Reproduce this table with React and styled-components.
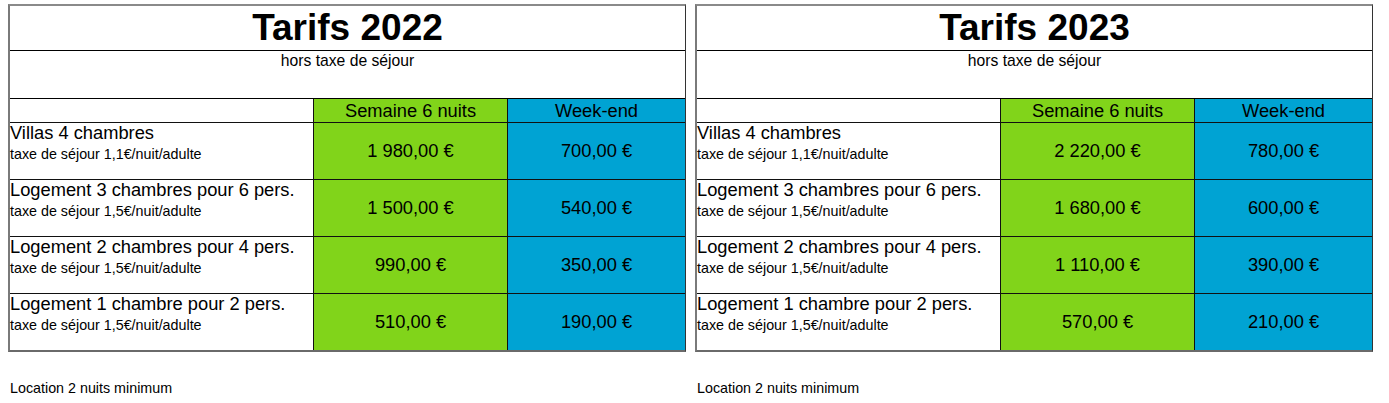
import React from "react";
import styled, { createGlobalStyle } from "styled-components";

const Global = createGlobalStyle`
	body {
		margin: 0;
		background: #fff;
		font-family: "Liberation Sans", Arial, sans-serif;
		color: #000;
	}
`;

const Page = styled.div`
	display: flex;
	gap: 9px;
	padding: 4px 0 0 8px;
`;

const Column = styled.div`
	display: flex;
	flex-direction: column;
`;

const Table = styled.div`
	display: grid;
	grid-template-columns: 304px 194px 177px;
	grid-template-rows: 45px 48px 24px 57px 57px 57px 56px;
	border-left: 2px solid #7a7a7a;
	border-top: 2px solid #8a8a8a;
	border-right: 1px solid #333;
	border-bottom: 2px solid #6a6a6a;
	width: fit-content;
`;

const Title = styled.div`
	grid-column: 1 / 4;
	border-bottom: 1px solid #000;
	font-size: 37px;
	font-weight: 700;
	text-align: center;
	line-height: 44px;
`;

const Subtitle = styled.div`
	grid-column: 1 / 4;
	border-bottom: 1px solid #000;
	font-size: 15.7px;
	text-align: center;
	padding-top: 1px;
	line-height: 18px;
`;

const Cell = styled.div`
	box-sizing: border-box;
	border-bottom: ${(p) => (p.$last ? "none" : "1px solid #111")};
	border-right: ${(p) => (p.$end ? "none" : "1px solid #111")};
	background: ${(p) => p.$bg || "#fff"};
`;

const HeadCell = styled(Cell)`
	font-size: 18.3px;
	text-align: center;
	line-height: 23px;
`;

const Label = styled(Cell)`
	display: flex;
	flex-direction: column;
	padding: 0;
`;

const Name = styled.span`
	font-size: 18.3px;
	line-height: 20px;
`;

const Tax = styled.span`
	font-size: 14.3px;
	line-height: 22px;
`;

const Price = styled(Cell)`
	display: flex;
	align-items: center;
	justify-content: center;
	font-size: 18.3px;
`;

const Footer = styled.div`
	font-size: 14.3px;
	padding: 28px 0 0 2px;
`;

const GREEN = "#81d41a";
const BLUE = "#00a3d3";

const tables = [
	{
		year: "2022",
		rows: [
			["Villas 4 chambres", "1,1", "1 980,00 €", "700,00 €"],
			["Logement 3 chambres pour 6 pers.", "1,5", "1 500,00 €", "540,00 €"],
			["Logement 2 chambres pour 4 pers.", "1,5", "990,00 €", "350,00 €"],
			["Logement 1 chambre pour 2 pers.", "1,5", "510,00 €", "190,00 €"],
		],
	},
	{
		year: "2023",
		rows: [
			["Villas 4 chambres", "1,1", "2 220,00 €", "780,00 €"],
			["Logement 3 chambres pour 6 pers.", "1,5", "1 680,00 €", "600,00 €"],
			["Logement 2 chambres pour 4 pers.", "1,5", "1 110,00 €", "390,00 €"],
			["Logement 1 chambre pour 2 pers.", "1,5", "570,00 €", "210,00 €"],
		],
	},
];

const PriceTable = ({ year, rows }) => (
	<Column>
		<Table>
			<Title>Tarifs {year}</Title>
			<Subtitle>hors taxe de séjour</Subtitle>
			<Cell />
			<HeadCell $bg={GREEN}>Semaine 6 nuits</HeadCell>
			<HeadCell $bg={BLUE} $end>
				Week-end
			</HeadCell>
			{rows.map(([name, tax, week, weekend], i) => {
				const last = i === rows.length - 1;
				return (
					<React.Fragment key={name}>
						<Label $last={last}>
							<Name>{name}</Name>
							<Tax>taxe de séjour {tax}€/nuit/adulte</Tax>
						</Label>
						<Price $bg={GREEN} $last={last}>
							{week}
						</Price>
						<Price $bg={BLUE} $last={last} $end>
							{weekend}
						</Price>
					</React.Fragment>
				);
			})}
		</Table>
		<Footer>Location 2 nuits minimum</Footer>
	</Column>
);

const App = () => (
	<>
		<Global />
		<Page>
			{tables.map((t) => (
				<PriceTable key={t.year} {...t} />
			))}
		</Page>
	</>
);

export default App;
